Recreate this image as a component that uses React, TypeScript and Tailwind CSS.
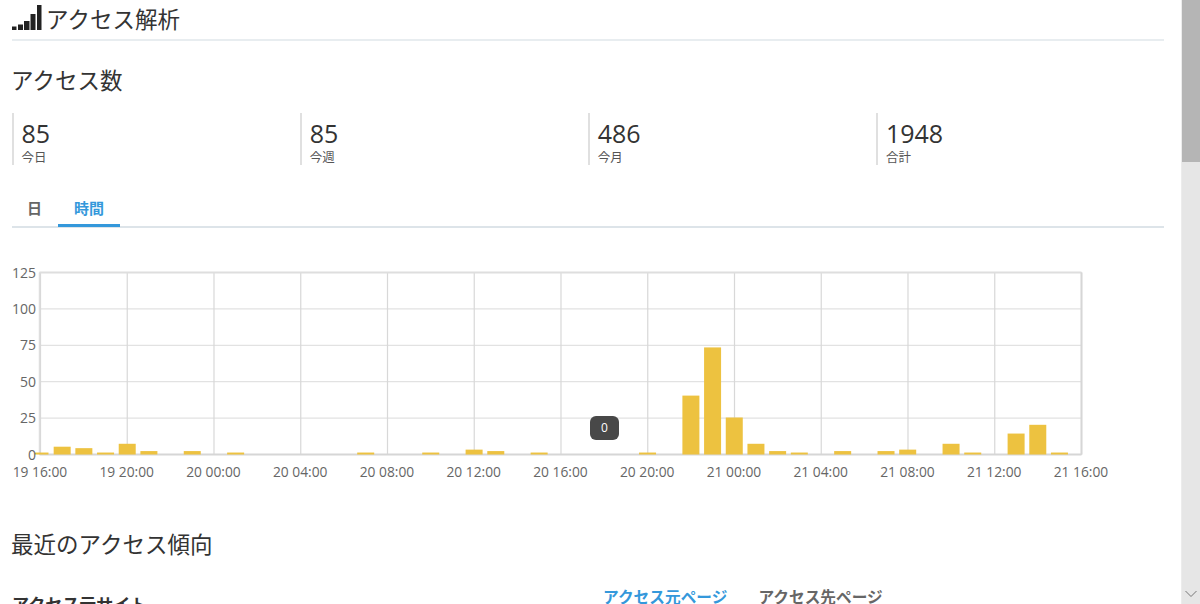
const FONT = "font-['Open_Sans','Noto_Sans_CJK_JP',sans-serif]";

const stats = [
  { value: "85", label: "今日" },
  { value: "85", label: "今週" },
  { value: "486", label: "今月" },
  { value: "1948", label: "合計" },
];

const hourly: Record<number, number> = {
  1: 5, 2: 4, 3: 1, 4: 7, 5: 2, 7: 2, 9: 1, 15: 1, 18: 1, 20: 3, 21: 2, 23: 1, 28: 1,
  30: 40, 31: 73, 32: 25, 33: 7, 34: 2, 35: 1, 37: 2, 39: 2, 40: 3, 42: 7, 43: 1, 45: 14, 46: 20, 47: 1,
};

const xLabels = [
  "19 16:00", "19 20:00", "20 00:00", "20 04:00", "20 08:00", "20 12:00", "20 16:00",
  "20 20:00", "21 00:00", "21 04:00", "21 08:00", "21 12:00", "21 16:00",
];
const yLabels = [125, 100, 75, 50, 25, 0];

const PLOT_L = 27.5;
const PLOT_R = 1069.5;
const TICK_L = 28.5;
const PLOT_T = 12.5;
const PLOT_B = 194.5;
const STEP_X = (PLOT_R - TICK_L) / 12;
const STEP_Y = (PLOT_B - PLOT_T) / 5;

function Chart() {
  return (
    <div className="relative mt-8 h-[230px]">
      <svg width="1152" height="230" className="block">
        {yLabels.map((v, i) => (
          <line key={v} x1={PLOT_L} x2={PLOT_R} y1={PLOT_T + STEP_Y * i} y2={PLOT_T + STEP_Y * i} stroke="#e2e2e2" strokeWidth="1.2" />
        ))}
        {xLabels.map((l, i) => (
          <line key={l} x1={TICK_L + STEP_X * i} x2={TICK_L + STEP_X * i} y1={PLOT_T} y2={PLOT_B} stroke="#d8d8d8" strokeWidth="1.2" />
        ))}
        <line x1={PLOT_L} x2={PLOT_R} y1={PLOT_T} y2={PLOT_T} stroke="#dedede" strokeWidth="1.8" />
        <line x1={PLOT_R} x2={PLOT_R} y1={PLOT_T} y2={PLOT_B} stroke="#d6d6d6" strokeWidth="2" />
        <line x1={PLOT_L} x2={PLOT_L} y1={PLOT_T} y2={PLOT_B} stroke="#dedede" strokeWidth="1.5" />
        <line x1={PLOT_L} x2={PLOT_R} y1={PLOT_B} y2={PLOT_B} stroke="#d6d6d6" strokeWidth="1.8" />
        <rect x={23} y={PLOT_B - 1.46 - 0.5} width={13.5} height={2} fill="#edc240" />
        {Object.entries(hourly).map(([k, v]) => {
          const cx = 28.5 + 21.68 * Number(k);
          const h = v * 1.46;
          return <rect key={k} x={cx - 8.5} y={PLOT_B - h - 0.5} width={17} height={h + 0.5} fill="#edc240" />;
        })}
        {yLabels.map((v, i) => (
          <text key={v} x={24} y={PLOT_T + STEP_Y * i + 5} textAnchor="end" fontFamily="'Open Sans',sans-serif" fontSize="14" fill="#666">{v}</text>
        ))}
        {xLabels.map((l, i) => (
          <text key={l} x={TICK_L + STEP_X * i - 0.5} y={217} textAnchor="middle" fontFamily="'Open Sans',sans-serif" fontSize="13.8" fill="#666">{l}</text>
        ))}
      </svg>
      <div className="absolute left-[578px] top-[156px] flex h-6 w-[29px] items-center justify-center rounded-md bg-[#484848] text-[12px] text-white">0</div>
    </div>
  );
}

function SignalIcon() {
  return (
    <svg width="30" height="26" viewBox="0 0 30 26" className="block shrink-0" fill="#222">
      <rect x="0" y="21.5" width="4.5" height="3.5" />
      <rect x="6" y="19.5" width="5" height="5.5" />
      <rect x="12" y="16" width="5.5" height="9" />
      <rect x="18.5" y="9" width="5" height="16" />
      <rect x="25" y="0" width="4.5" height="25" />
    </svg>
  );
}

export default function App() {
  return (
    <div className={`flex h-[604px] w-full overflow-hidden bg-white text-[#333] ${FONT}`}>
      <main className="min-w-0 flex-1 pl-3 pr-[17px]">
        <header className="flex h-[41px] items-start gap-[4px] border-b-2 border-[#e8edf0] pt-[5px]">
          <SignalIcon />
          <h1 className="text-[22.5px] font-normal leading-[30px]">アクセス解析</h1>
        </header>

        <h2 className="-ml-[1px] mt-[24px] text-[22.5px] font-normal leading-[32px]">アクセス数</h2>

        <div className="-ml-[0.5px] mt-[16px] grid grid-cols-4">
          {stats.map((s) => (
            <div key={s.label} className="h-[52px] border-l-2 border-[#e0e0e0] pl-[8px]">
              <div className="pt-[2px] text-[25px] leading-[36px]">{s.value}</div>
              <div className="text-[12.5px] leading-[14px] text-[#555]">{s.label}</div>
            </div>
          ))}
        </div>

        <nav className="mt-[19px] flex h-[44px] items-start border-b-2 border-[#dde4e9] text-[15px] font-bold">
          <div className="mr-[1px] h-[42px] w-[45px] pt-[13px] text-center leading-[22px] text-[#666]">日</div>
          <div className="h-[43px] w-[62px] border-b-[3px] border-[#3498db] pt-[13px] text-center leading-[22px] text-[#3498db]">時間</div>
        </nav>

        <Chart />

        <h2 className="-ml-[1px] mt-[39px] text-[22.5px] font-normal leading-[32px]">最近のアクセス傾向</h2>

        <div className="mt-[12px] grid grid-cols-2">
          <h3 className="mt-[19px] text-[17px] font-bold leading-[26px]">アクセス元サイト</h3>
          <div className="flex gap-[31px] pl-[15px] pt-[11px] text-[15.7px] font-bold leading-[26px]">
            <span className="text-[#3498db]">アクセス元ページ</span>
            <span className="text-[#666]">アクセス先ページ</span>
          </div>
        </div>
      </main>

      <aside className="flex w-[19px] shrink-0 flex-col border-l border-[#ececec] bg-[#e6e6e6]">
        <div className="h-[162px] bg-[#b5b5b5]" />
        <div className="flex-1" />
        <svg width="18" height="18" viewBox="0 0 18 18" className="block" fill="none" stroke="#777" strokeWidth="1">
          <path d="M3.5 5 L9 10.5 L14.5 5" />
        </svg>
      </aside>
    </div>
  );
}
